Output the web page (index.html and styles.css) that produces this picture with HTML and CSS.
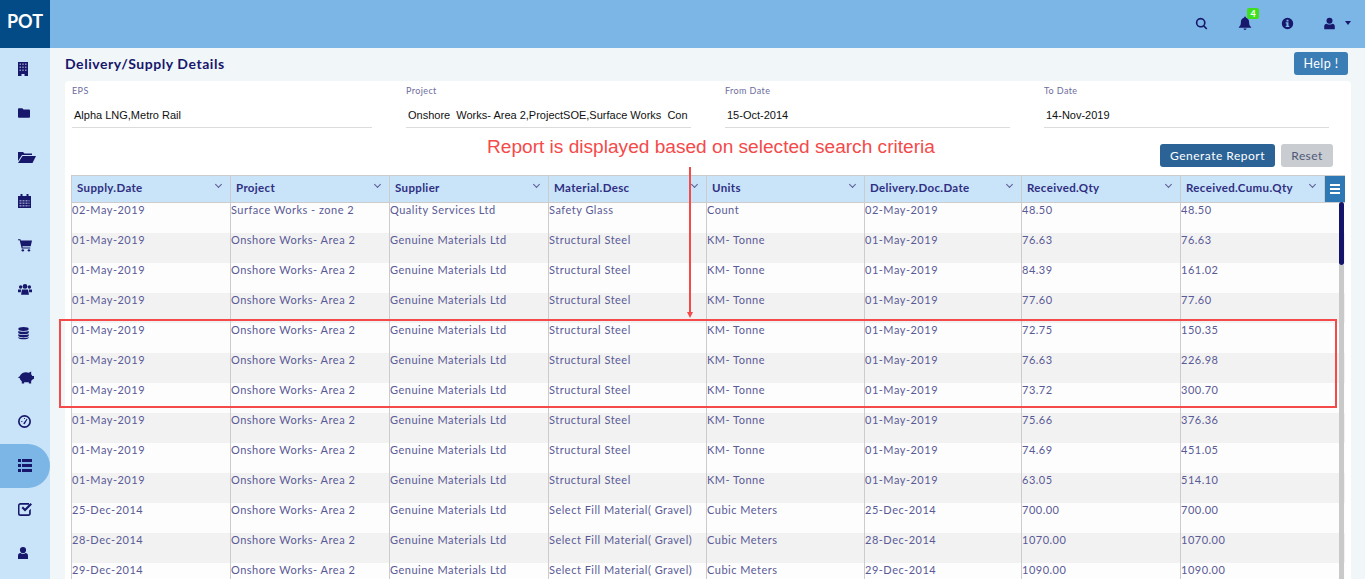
FILE: index.html
```html
<!DOCTYPE html>
<html>
<head>
<meta charset="UTF-8">
<title>Delivery/Supply Details</title>
<link rel="stylesheet" href="styles.css">
</head>
<body>
<div class="layout">
  <aside class="sidebar">
    <div class="logo">POT</div>
    <nav>
      <a class="nav-item"><svg class="i-building" viewBox="0 0 10 14"><path d="M0 0h10v14H6.500v-2h-3v2H0z"/><path class="cut" d="M1.500 1.500h1.500v1.500H1.500zM4.250 1.500h1.500v1.500h-1.500zM7 1.500h1.500v1.500H7zM1.500 4.500h1.500V6H1.500zM4.250 4.500h1.500V6h-1.500zM7 4.500h1.500V6H7zM1.500 7.500h1.500V9H1.500zM4.250 7.500h1.500V9h-1.500zM7 7.500h1.500V9H7z"/></svg></a>
      <a class="nav-item"><svg class="i-folder" viewBox="1 3 14 11"><path d="M1 4a1 1 0 0 1 1-1h4l1.500 1.500H14a1 1 0 0 1 1 1V13a1 1 0 0 1-1 1H2a1 1 0 0 1-1-1z"/></svg></a>
      <a class="nav-item"><svg class="i-open" viewBox="0 2 18 12"><path d="M0 3h5l1.500 1.500H14V6H4L0 12z"/><path d="M4.500 7H18l-3.500 7H0z"/></svg></a>
      <a class="nav-item"><svg class="i-calendar" viewBox="1.500 1 13 14"><path d="M1.500 3H4V1h2v2h4V1h2v2h2.500v12h-13z"/><path class="cut" d="M3 7h2v1.500H3zM6 7h2v1.500H6zM9 7h2v1.500H9zM12 7h1v1.500h-1zM3 9.500h2V11H3zM6 9.500h2V11H6zM9 9.500h2V11H9zM12 9.500h1V11h-1zM3 12h2v1.500H3zM6 12h2v1.500H6zM9 12h2v1.500H9zM12 12h1v1.500h-1z"/></svg></a>
      <a class="nav-item"><svg class="i-cart" viewBox="0 1.500 16 14.500"><path d="M0 1.500h2.800l.4 1.500H16l-1.500 6.500H5l.3 1.500H14v1.300H4.200L1.900 2.800H0z"/><circle cx="5.500" cy="14.300" r="1.400"/><circle cx="12.500" cy="14.300" r="1.400"/></svg></a>
      <a class="nav-item"><svg class="i-users" viewBox="0 1 16 14"><circle cx="3" cy="5" r="2"/><circle cx="13" cy="5" r="2"/><circle cx="8" cy="4.500" r="2.700"/><path d="M0 8h3.500L3.200 11H0zM12.500 8H16v3h-3.200zM4.500 8h7l1 6h-9z"/></svg></a>
      <a class="nav-item"><svg class="i-db" viewBox="2 .700 12 15"><ellipse cx="8" cy="3" rx="6" ry="2.300"/><path d="M2 5c1 1.500 11 1.500 12 0v2.500c-1 2-11 2-12 0zM2 8.800c1 1.500 11 1.500 12 0v2.400c-1 2-11 2-12 0zM2 12.300c1 1.500 11 1.500 12 0V13c-1 2.600-11 2.600-12 0z"/></svg></a>
      <a class="nav-item"><svg class="i-piggy" viewBox="0 2 17 13"><path d="M0 8c1 0 1.500-.3 2-1 1-2.500 3.500-4 6.500-4 1 0 2 .2 3 .5L14 2v3l1.200 1.800H17v3l-2 1-1 1.500V15h-2.500v-1.500h-5V15H4v-2.500C2.800 11.500 2 10.300 1.800 9 1 9 .3 8.800 0 8z"/></svg></a>
      <a class="nav-item"><svg class="i-gauge" viewBox="1 1 14 14"><path fill-rule="evenodd" d="M8 1a7 7 0 1 1 0 14A7 7 0 0 1 8 1zm0 1.800a5.200 5.200 0 1 0 0 10.400A5.200 5.200 0 0 0 8 2.800z"/><path d="M7.400 9l3-4 .8.500L8.800 10a1 1 0 1 1-1.400-1zM4.500 7.500h1.200v1H4.500zM7.500 4.200h1v1.200h-1z"/></svg></a>
      <a class="nav-item active"><svg class="i-list" viewBox="0 0 14 13"><path d="M0 0h3v3H0zM4 0h10v3H4zM0 5h3v3H0zM4 5h10v3H4zM0 10h3v3H0zM4 10h10v3H4z"/></svg></a>
      <a class="nav-item"><svg class="i-check" viewBox="1 2 14 13"><path fill-rule="evenodd" d="M3.500 2H12v1.700H3.500c-.6 0-1 .4-1 1v7.600c0 .6.400 1 1 1h7.600c.6 0 1-.4 1-1V9.500l1.700-1.700v4.700c0 1.400-1.100 2.500-2.500 2.500H3.500A2.500 2.500 0 0 1 1 12.500v-8C1 3.100 2.100 2 3.500 2z"/><path d="M4.500 7l1.500-1.500 2 2L13.500 2 15 3.500 8 10.500z"/></svg></a>
      <a class="nav-item"><svg class="i-user" viewBox="2.500 1.300 11 13.200"><circle cx="8" cy="4.700" r="3.400"/><path d="M2.500 14.500V11c0-1.800 1.200-3 2.700-3 .8.700 1.700 1 2.800 1s2-.3 2.800-1c1.500 0 2.700 1.200 2.700 3v3.500z"/></svg></a>
    </nav>
  </aside>

  <div class="main">
    <header class="topbar">
      <a class="top-icon"><svg viewBox="0 0 16 16"><path fill-rule="evenodd" d="M7 1a6 6 0 0 1 4.800 9.600l3.400 3.400-1.400 1.400-3.400-3.400A6 6 0 1 1 7 1zm0 2a4 4 0 1 0 0 8 4 4 0 0 0 0-8z"/></svg></a>
      <a class="top-icon bell"><svg viewBox="0 0 16 16"><path d="M8 0.500a1 1 0 0 1 1 1v.6c2.300.5 3.700 2.300 3.700 4.900 0 3 .8 4.300 2.300 5.500v1H1v-1C2.500 11.300 3.300 10 3.300 7c0-2.600 1.400-4.400 3.700-4.900v-.6a1 1 0 0 1 1-1zM6.300 14.300h3.400a1.700 1.700 0 0 1-3.400 0z"/></svg><span class="badge">4</span></a>
      <a class="top-icon"><svg viewBox="0 0 16 16"><path fill-rule="evenodd" d="M8 1a7 7 0 1 1 0 14A7 7 0 0 1 8 1zM6.800 3.300v2.200h2.400V3.300zM5.800 6.600v1.500h1v2.600h-1v1.500h4.400v-1.500h-1V6.600z"/></svg></a>
      <a class="top-icon"><svg viewBox="0 0 16 16"><circle cx="8" cy="4.700" r="3.700"/><path d="M1.500 15v-3.500c0-2 1.300-3.300 3-3.300.9.700 2.200 1.100 3.500 1.100s2.600-.4 3.500-1.100c1.700 0 3 1.300 3 3.300V15z"/></svg><span class="caret"></span></a>
    </header>

    <div class="content">
      <div class="title-row">
        <h1>Delivery/Supply Details</h1>
        <button class="btn-help">Help !</button>
      </div>

      <section class="card">
        <div class="filters">
          <div class="field field-eps"><label>EPS</label><div class="value">Alpha LNG,Metro Rail</div></div>
          <div class="field"><label>Project</label><div class="value">Onshore&nbsp; Works- Area 2,ProjectSOE,Surface Works&nbsp; Con</div></div>
          <div class="field"><label>From Date</label><div class="value">15-Oct-2014</div></div>
          <div class="field"><label>To Date</label><div class="value">14-Nov-2019</div></div>
        </div>
        <div class="actions">
          <button class="btn-generate">Generate Report</button>
          <button class="btn-reset">Reset</button>
        </div>

        <table class="grid">
          <colgroup>
            <col class="c-a"><col class="c-a"><col class="c-a"><col class="c-b"><col class="c-b"><col class="c-c"><col class="c-a"><col class="c-d"><col class="c-e">
          </colgroup>
          <thead>
            <tr>
              <th>Supply.Date<i class="chev"></i></th>
              <th>Project<i class="chev"></i></th>
              <th>Supplier<i class="chev"></i></th>
              <th>Material.Desc<i class="chev"></i></th>
              <th>Units<i class="chev"></i></th>
              <th>Delivery.Doc.Date<i class="chev"></i></th>
              <th>Received.Qty<i class="chev"></i></th>
              <th>Received.Cumu.Qty<i class="chev"></i></th>
              <th class="menu-cell"><span class="menu-btn"><b></b><b></b><b></b></span></th>
            </tr>
          </thead>
          <tbody>
            <tr><td>02-May-2019</td><td>Surface Works - zone 2</td><td>Quality Services Ltd</td><td>Safety Glass</td><td>Count</td><td>02-May-2019</td><td>48.50</td><td colspan="2">48.50</td></tr>
            <tr><td>01-May-2019</td><td>Onshore Works- Area 2</td><td>Genuine Materials Ltd</td><td>Structural Steel</td><td>KM- Tonne</td><td>01-May-2019</td><td>76.63</td><td colspan="2">76.63</td></tr>
            <tr><td>01-May-2019</td><td>Onshore Works- Area 2</td><td>Genuine Materials Ltd</td><td>Structural Steel</td><td>KM- Tonne</td><td>01-May-2019</td><td>84.39</td><td colspan="2">161.02</td></tr>
            <tr><td>01-May-2019</td><td>Onshore Works- Area 2</td><td>Genuine Materials Ltd</td><td>Structural Steel</td><td>KM- Tonne</td><td>01-May-2019</td><td>77.60</td><td colspan="2">77.60</td></tr>
            <tr><td>01-May-2019</td><td>Onshore Works- Area 2</td><td>Genuine Materials Ltd</td><td>Structural Steel</td><td>KM- Tonne</td><td>01-May-2019</td><td>72.75</td><td colspan="2">150.35</td></tr>
            <tr><td>01-May-2019</td><td>Onshore Works- Area 2</td><td>Genuine Materials Ltd</td><td>Structural Steel</td><td>KM- Tonne</td><td>01-May-2019</td><td>76.63</td><td colspan="2">226.98</td></tr>
            <tr><td>01-May-2019</td><td>Onshore Works- Area 2</td><td>Genuine Materials Ltd</td><td>Structural Steel</td><td>KM- Tonne</td><td>01-May-2019</td><td>73.72</td><td colspan="2">300.70</td></tr>
            <tr><td>01-May-2019</td><td>Onshore Works- Area 2</td><td>Genuine Materials Ltd</td><td>Structural Steel</td><td>KM- Tonne</td><td>01-May-2019</td><td>75.66</td><td colspan="2">376.36</td></tr>
            <tr><td>01-May-2019</td><td>Onshore Works- Area 2</td><td>Genuine Materials Ltd</td><td>Structural Steel</td><td>KM- Tonne</td><td>01-May-2019</td><td>74.69</td><td colspan="2">451.05</td></tr>
            <tr><td>01-May-2019</td><td>Onshore Works- Area 2</td><td>Genuine Materials Ltd</td><td>Structural Steel</td><td>KM- Tonne</td><td>01-May-2019</td><td>63.05</td><td colspan="2">514.10</td></tr>
            <tr><td>25-Dec-2014</td><td>Onshore Works- Area 2</td><td>Genuine Materials Ltd</td><td>Select Fill Material( Gravel)</td><td>Cubic Meters</td><td>25-Dec-2014</td><td>700.00</td><td colspan="2">700.00</td></tr>
            <tr><td>28-Dec-2014</td><td>Onshore Works- Area 2</td><td>Genuine Materials Ltd</td><td>Select Fill Material( Gravel)</td><td>Cubic Meters</td><td>28-Dec-2014</td><td>1070.00</td><td colspan="2">1070.00</td></tr>
            <tr><td>29-Dec-2014</td><td>Onshore Works- Area 2</td><td>Genuine Materials Ltd</td><td>Select Fill Material( Gravel)</td><td>Cubic Meters</td><td>29-Dec-2014</td><td>1090.00</td><td colspan="2">1090.00</td></tr>
          </tbody>
        </table>
      </section>
    </div>
  </div>
</div>

<!-- scrollbar and red callout sit on top of the grid -->
<div class="scroll-track"></div>
<div class="scroll-thumb"></div>
<div class="note-text">Report is displayed based on selected search criteria</div>
<div class="note-line"></div>
<div class="note-head"></div>
<div class="note-box"></div>
</body>
</html>
```

FILE: styles.css
```css
html, body {
  margin: 0;
  height: 100%;
  overflow: hidden;
}
body {
  font-family: Lato, "Open Sans", sans-serif;
  background-color: #f1f6f9;
}
.layout {
  display: flex;
  height: 579px;
}

/* sidebar */
.sidebar {
  width: 50px;
  flex: none;
  background-color: #c9e4f9;
}
.logo {
  height: 48px;
  line-height: 43px;
  background-color: #034b86;
  color: #fff;
  font-size: 18px;
  font-weight: 700;
  text-align: center;
}
.nav-item {
  display: flex;
  align-items: center;
  height: 44px;
  padding: 0 0 2px 18px;
  box-sizing: border-box;
}
.nav-item svg {
  fill: #17176b;
}
.nav-item .cut {
  fill: #8a8fc0;
}
.nav-item.active {
  background-color: #7cb6e6;
  border-radius: 0 22px 22px 0;
}
.i-building { width: 10px; height: 14px; }
.i-folder { width: 12px; height: 10px; }
.i-open { width: 18px; height: 12px; }
.i-calendar { width: 13px; height: 14px; }
.i-cart { width: 14px; height: 13px; }
.i-users { width: 14px; height: 13px; }
.i-db { width: 11px; height: 13px; }
.i-piggy { width: 16px; height: 13px; }
.i-gauge { width: 13px; height: 13px; }
.i-list { width: 14px; height: 13px; }
.i-check { width: 14px; height: 13px; }
.i-user { width: 10px; height: 12px; }

/* top bar */
.main {
  flex: 1;
  min-width: 0;
  display: flex;
  flex-direction: column;
}
.topbar {
  height: 48px;
  flex: none;
  background-color: #7cb6e6;
  display: flex;
  align-items: center;
  justify-content: flex-end;
  padding: 0 14px 2px 0;
  box-sizing: border-box;
}
.top-icon {
  position: relative;
  display: flex;
  align-items: center;
  margin-left: 29px;
}
.top-icon svg {
  width: 13px;
  height: 13px;
  fill: #17176b;
}
.bell {
  margin-left: 30px;
}
.bell svg {
  width: 14px;
  height: 14px;
}
.badge {
  position: absolute;
  left: 9px;
  top: -8px;
  width: 12px;
  height: 11px;
  background-color: #3fdf1d;
  border-radius: 2px;
  color: #fff;
  font-size: 9px;
  font-weight: 700;
  line-height: 11px;
  text-align: center;
}
.caret {
  margin-left: 9px;
  border-left: 3.500px solid transparent;
  border-right: 3.500px solid transparent;
  border-top: 4px solid #17176b;
}

/* content */
.content {
  flex: 1;
  min-height: 0;
  padding: 0 14px 0 15px;
}
.title-row {
  display: flex;
  justify-content: space-between;
  height: 33px;
  align-items: flex-start;
}
h1 {
  margin: 7px 0 0;
  font-size: 14px;
  line-height: 17px;
  font-weight: 700;
  letter-spacing: .55px;
  color: #17176b;
}
button {
  font-family: Lato, sans-serif;
  border: 0;
  border-radius: 3px;
  padding: 0;
}
.btn-help {
  width: 54px;
  height: 23px;
  margin: 4px 3px 0 0;
  background-color: #3b7db5;
  color: #fff;
  font-size: 12.500px;
  letter-spacing: .4px;
}
.card {
  height: 500px;
  background-color: #fff;
  border-radius: 4px 4px 0 0;
  padding: 0 6px;
  overflow: hidden;
}
.filters {
  display: flex;
  gap: 34px;
  height: 47px;
}
.field {
  width: 285px;
  margin-left: 1px;
  margin-right: -1px;
}
.field-eps {
  width: 300px;
}
.field label {
  display: block;
  padding-top: 4px;
  font-size: 9px;
  line-height: 11px;
  letter-spacing: .4px;
  color: #6d6d9e;
}
.value {
  height: 19px;
  margin-top: 12px;
  padding-left: 2px;
  border-bottom: 1px solid #dcdcdc;
  font-family: "Liberation Sans", Arial, sans-serif;
  font-size: 11px;
  line-height: 14px;
  color: #111;
  white-space: nowrap;
}
.actions {
  display: flex;
  justify-content: flex-end;
  gap: 6px;
  height: 47px;
  padding: 16px 12px 0 0;
  box-sizing: border-box;
}
.btn-generate {
  width: 115px;
  height: 23px;
  background-color: #2b6396;
  color: #fff;
  font-size: 12px;
  letter-spacing: .5px;
}
.btn-reset {
  width: 52px;
  height: 23px;
  background-color: #c9ccd1;
  color: #4f5a78;
  font-size: 12px;
  letter-spacing: .4px;
}

/* grid */
.grid {
  table-layout: fixed;
  width: 1273px;
  border-collapse: separate;
  border-spacing: 0;
  border-left: 1px solid #ccc;
}
.c-a { width: 159px; }
.c-b { width: 158px; }
.c-c { width: 157px; }
.c-d { width: 144px; }
.c-e { width: 20px; }
.grid th {
  position: relative;
  height: 23px;
  padding: 0 0 3px 5px;
  background-color: #c9e3f8;
  border-top: 1px solid #ccc;
  border-right: 1px solid #ccc;
  border-bottom: 1px solid #ccc;
  color: #2f2f82;
  font-size: 11.500px;
  font-weight: 700;
  letter-spacing: .35px;
  text-align: left;
  white-space: nowrap;
}
.chev {
  position: absolute;
  right: 9px;
  top: 6px;
  width: 4px;
  height: 4px;
  border-right: 1px solid #5a5a96;
  border-bottom: 1px solid #5a5a96;
  transform: rotate(45deg);
}
.grid th.menu-cell {
  padding: 0;
  border-right: 0;
}
.menu-btn {
  display: flex;
  flex-direction: column;
  justify-content: center;
  gap: 2px;
  height: 26px;
  padding: 0 5px;
  background-color: #2e78b5;
}
.menu-btn b {
  height: 2px;
  background-color: #fff;
}
.grid td {
  height: 30px;
  padding: 0;
  box-sizing: border-box;
  border-right: 1px solid #ccc;
  vertical-align: top;
  color: #5a5a96;
  font-size: 11px;
  line-height: 14px;
  letter-spacing: .5px;
  white-space: nowrap;
  overflow: hidden;
}
.grid td:last-child {
  border-right: 0;
}
.grid tbody tr:nth-child(odd) td {
  background-color: #fdfdfd;
}
.grid tbody tr:nth-child(even) td {
  background-color: #f2f2f2;
}

/* scrollbar */
.scroll-track {
  position: absolute;
  left: 1339px;
  top: 265px;
  width: 5px;
  height: 314px;
  background-color: #c9c9c9;
}
.scroll-thumb {
  position: absolute;
  left: 1339px;
  top: 202px;
  width: 5px;
  height: 63px;
  background-color: #14146a;
  border-radius: 3px;
}

/* red callout */
.note-text {
  position: absolute;
  left: 487px;
  top: 136px;
  font-family: "Liberation Sans", Arial, sans-serif;
  font-size: 19.100px;
  line-height: 21px;
  color: #f44a4a;
  white-space: nowrap;
}
.note-line {
  position: absolute;
  left: 689px;
  top: 167px;
  width: 2px;
  height: 146px;
  background-color: #f44a4a;
}
.note-head {
  position: absolute;
  left: 687px;
  top: 312px;
  border-left: 3px solid transparent;
  border-right: 3px solid transparent;
  border-top: 6px solid #f44a4a;
}
.note-box {
  position: absolute;
  left: 59px;
  top: 319px;
  width: 1274px;
  height: 85px;
  border: 2px solid #f44a4a;
}
```
